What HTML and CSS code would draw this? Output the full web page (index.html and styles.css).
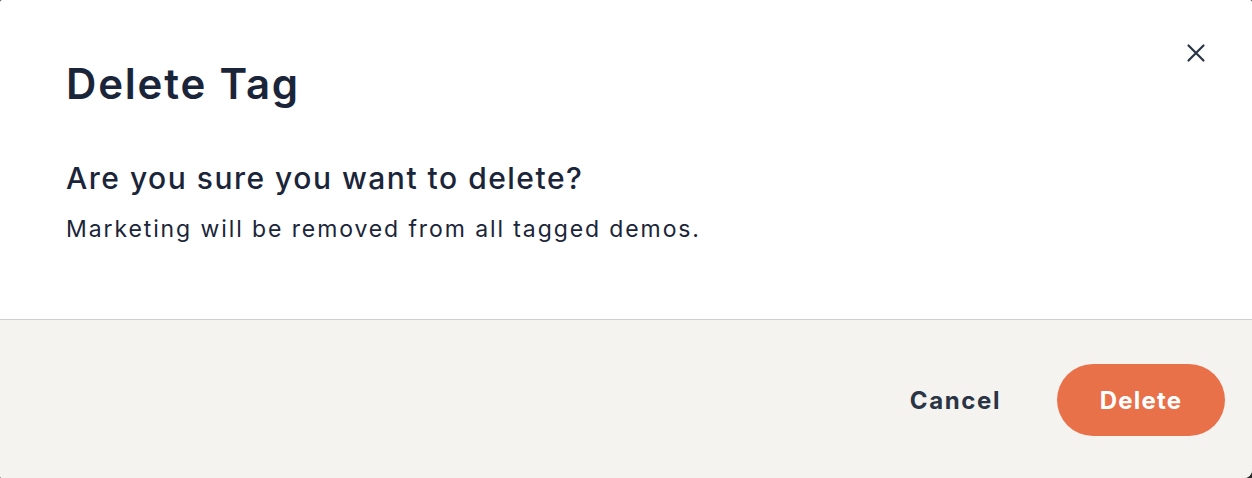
FILE: index.html
```html
<!DOCTYPE html>
<html>
<head>
<meta charset="utf-8">
<link rel="stylesheet" href="styles.css">
</head>
<body>
<div class="modal">
  <div class="modal-body">
    <h1 class="title">Delete Tag</h1>
    <h2 class="question">Are you sure you want to delete?</h2>
    <p class="desc">Marketing will be removed from all tagged demos.</p>
    <button class="close" aria-label="Close">
      <svg width="20" height="20" viewBox="0 0 20 20"><path d="M2.5 2.5 L17.5 17.5 M17.5 2.5 L2.5 17.5" stroke="#2a3444" stroke-width="2.2" stroke-linecap="round" fill="none"/></svg>
    </button>
  </div>
  <div class="modal-footer">
    <button class="btn-cancel">Cancel</button>
    <button class="btn-delete">Delete</button>
  </div>
</div>
</body>
</html>
```
FILE: styles.css
```css
html, body {
  margin: 0;
  padding: 0;
  background: #2b2b2b;
}
body {
  width: 1252px;
  height: 478px;
  overflow: hidden;
  font-family: "Inter", "Noto Sans", sans-serif;
  color: #1b2539;
}
.modal {
  width: 1252px;
  height: 478px;
  background: #ffffff;
  border-radius: 2px 2px 8px 2px;
  overflow: hidden;
  display: flex;
  flex-direction: column;
}
.modal-body {
  position: relative;
  height: 320px;
  flex: none;
  box-sizing: border-box;
  padding: 56px 66px 0 66px;
  border-bottom: 1px solid #cfcfcb;
}
.title {
  margin: 0;
  font-size: 42px;
  font-weight: 600;
  line-height: 56px;
  letter-spacing: 1.8px;
}
.question {
  margin: 48px 0 0 0;
  font-size: 30px;
  font-weight: 500;
  line-height: 36px;
  letter-spacing: 1.5px;
}
.desc {
  margin: 18px 0 0 0;
  font-size: 23px;
  font-weight: 400;
  line-height: 30px;
  letter-spacing: 1.9px;
}
.close {
  position: absolute;
  top: 43px;
  right: 46px;
  width: 20px;
  height: 20px;
  padding: 0;
  border: 0;
  background: transparent;
  display: flex;
}
.modal-footer {
  flex: 1;
  background: #f4f3f0;
  display: flex;
  align-items: center;
  justify-content: flex-end;
  padding: 2px 27px 0 0;
  gap: 56px;
}
.btn-cancel {
  border: 0;
  background: transparent;
  padding: 0;
  font-family: inherit;
  font-size: 24px;
  font-weight: 650;
  letter-spacing: 1.6px;
  color: #2a3444;
}
.btn-delete {
  border: 0;
  background: #e9714a;
  color: #ffffff;
  font-family: inherit;
  font-size: 24px;
  font-weight: 650;
  letter-spacing: 1.2px;
  width: 168px;
  height: 72px;
  border-radius: 36px;
}
```
